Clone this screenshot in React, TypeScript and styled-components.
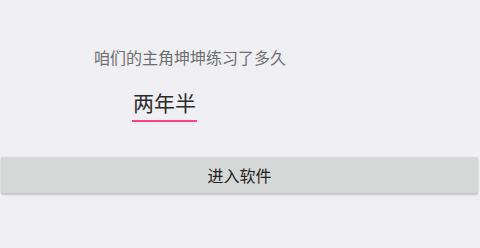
import styled, { createGlobalStyle } from "styled-components";

const GlobalStyle = createGlobalStyle`
  html, body {
    margin: 0;
    padding: 0;
    background: #efeff4;
  }
  body {
    font-family: "Roboto", "Noto Sans CJK SC", sans-serif;
  }
`;

const Screen = styled.div`
  width: 480px;
  height: 248px;
  box-sizing: border-box;
  padding-top: 49px;
  display: flex;
  flex-direction: column;
`;

const Question = styled.div`
  margin-left: 94px;
  font-size: 16px;
  line-height: 20px;
  color: #6e6e6e;
`;

const AnswerRow = styled.div`
  margin-top: 22px;
  margin-left: 132px;
  display: flex;
`;

const Answer = styled.div`
  padding: 0 1px 3px 1px;
  font-size: 21px;
  line-height: 26px;
  color: #2b2b2b;
  border-bottom: 2px solid #ff4081;
`;

const EnterButton = styled.button`
  margin: 35px 2px 0 1px;
  height: 36px;
  border: none;
  border-radius: 2px;
  background: #d6d7d7;
  box-shadow: 0 2px 2px rgba(0, 0, 0, 0.18), 0 0 1px rgba(0, 0, 0, 0.12);
  font-family: "Roboto", "Noto Sans CJK SC", sans-serif;
  font-size: 16px;
  color: #222;
  display: flex;
  align-items: center;
  justify-content: center;
  padding: 0;
`;

export default function App() {
  return (
    <>
      <GlobalStyle />
      <Screen>
        <Question>咱们的主角坤坤练习了多久</Question>
        <AnswerRow>
          <Answer>两年半</Answer>
        </AnswerRow>
        <EnterButton>进入软件</EnterButton>
      </Screen>
    </>
  );
}
